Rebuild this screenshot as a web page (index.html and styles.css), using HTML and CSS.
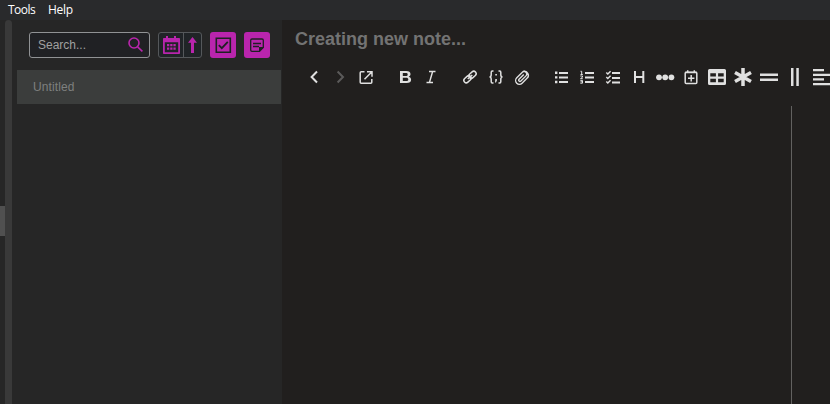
FILE: index.html
```html
<!DOCTYPE html>
<html lang="en">
<head>
<meta charset="utf-8">
<title>Notes</title>
<link rel="stylesheet" href="styles.css">
</head>
<body>
<nav class="menu"><span class="tools">Tools</span><span class="help">Help</span></nav>
<main class="app">
  <div class="gutter"><div class="handle"></div></div>
  <div class="track"></div>
  <aside class="sidebar">
    <div class="filters">
      <div class="search"><span>Search...</span>
        <svg width="16" height="16" viewBox="0 0 16 16" fill="none" stroke="#b925ad" stroke-width="1.6"><circle cx="6" cy="6" r="5"/><path d="M9.600 9.800l4.800 4.600"/></svg>
      </div>
      <div class="sort">
        <svg width="24" height="24" viewBox="0 0 24 24"><path fill="#b925ad" fill-rule="evenodd" d="M4.800 5H7V3h2v2h6V3h2v2h3.200q.8 0 .8.8v14.400q0 .8-.8.800H4.800q-.8 0-.8-.8V5.800q0-.8.8-.8zM5.800 9.300v9.900h13.400V9.300z"/><path fill="#b925ad" d="M8 11h2.300v2.300H8zm3.200 0h2.300v2.300h-2.300zm3.200 0h2.300v2.300h-2.300zM8 14.400h2.300v2.300H8zm3.200 0h2.300v2.300h-2.300zm3.200 0h2.300v2.300h-2.300z"/></svg>
        <i class="split"></i>
        <svg width="17" height="24" viewBox="0 0 17 24" fill="#b925ad"><path d="M8.500 4l4.500 5.700h-3V20H7V9.700H4z"/></svg>
      </div>
      <div class="action"><svg width="26" height="26" viewBox="0 0 26 26" fill="none" stroke="#1f2023"><path stroke-width="1.600" d="M6.300 6.300h14v14h-14z"/><path stroke-width="1.800" d="M8.800 13.200l3 3 6-6.300"/></svg></div>
      <div class="action"><svg width="26" height="26" viewBox="0 0 26 26" fill="none" stroke="#1f2023" stroke-width="1.300"><path d="M15.500 19.300H8q-1.300 0-1.300-1.300V8.300Q6.700 7 8 7h10q1.300 0 1.300 1.300v7.200z"/><path d="M9 11.500h8M9 14.500h6"/><path fill="#1f2023" stroke="none" d="M15 20v-5h5z"/></svg></div>
    </div>
    <div class="note">Untitled</div>
  </aside>
  <section class="editor">
    <h1>Creating new note...</h1>
    <div class="toolbar">
      <svg viewBox="0 0 26 26"><path class="s2" d="M16 7.500L10.600 13l5.400 5.500"/></svg>
      <svg class="dim" viewBox="0 0 26 26"><path class="s2" d="M10.600 7.500L16 13l-5.400 5.500"/></svg>
      <svg viewBox="0 0 26 26"><path class="s" d="M11.500 7.700H8.200q-1 0-1 1v9.600q0 1 1 1h9.600q1 0 1-1V15M14 7.700h5v5M19 7.700l-7.500 7.500"/></svg>
      <i class="gap"></i>
      <svg viewBox="0 0 26 26"><path fill-rule="evenodd" class="f" d="M8 7h6.200c2.800 0 4.300 1.100 4.300 3.100 0 1.300-.7 2.200-1.800 2.600 1.500.4 2.400 1.400 2.400 3 0 2.200-1.700 3.300-4.500 3.300H8zM10.800 9v2.900h2.900c1.300 0 2-.5 2-1.500 0-1-.7-1.400-2-1.400zm0 4.800V17h3.300c1.400 0 2.200-.5 2.200-1.600s-.8-1.600-2.200-1.600z"/></svg>
      <svg viewBox="0 0 26 26"><path class="s" d="M11 7.600h6.500M8.500 18.600H15M14.600 7.600l-3.200 11"/></svg>
      <i class="gap"></i>
      <svg viewBox="0 0 26 26"><g class="s" transform="rotate(-42 13 13)"><rect x="5.600" y="10.600" width="8" height="4.800" rx="2.400"/><rect x="12.400" y="10.600" width="8" height="4.800" rx="2.400"/><path d="M10 13h6"/></g></svg>
      <svg viewBox="0 0 26 26"><path class="s" d="M10.500 7H9.300Q8.200 7 8.200 8.200v2.600Q8.200 13 6.500 13q1.700 0 1.700 2.200v2.600q0 1.200 1.100 1.200h1.200M15.500 7h1.200q1.100 0 1.100 1.200v2.600q0 2.200 1.700 2.200-1.700 0-1.700 2.200v2.600q0 1.200-1.100 1.200h-1.200"/><path class="f" d="M12.300 10h1.600v1.600h-1.600zm0 5h1.600v1.600L13 18.500h-1z"/></svg>
      <svg viewBox="0 0 26 26"><path class="s" transform="translate(.2 .9) rotate(-45 13 13) scale(.92)" d="M19 9.900H10a3.300 3.300 0 0 0 0 8.200h7.500a4.300 4.300 0 0 0 2.500-8M19 9.900c3 0 3 5.600 0 5.600h-8.300c-1.800 0-1.800-2.800 0-2.800H18"/></svg>
      <i class="gap"></i>
      <svg viewBox="0 0 26 26"><path class="s2" d="M11 9h9M11 13.500h9M11 18h9"/><path class="f" d="M7 7.600h2.400v2.400H7zm0 4.600h2.400v2.400H7zm0 4.600h2.400v2.400H7z"/></svg>
      <svg viewBox="0 0 26 26"><path class="s2" d="M11 9h9M11 13.500h9M11 18h9"/><path class="s thin" d="M6.500 7.300h1.200v3M6.500 10.500h2.300M6.300 12h2.200v1.200L6.500 14.700h2.300M6.300 16.400h2.200v2.800H6.300M6.500 17.800h2"/></svg>
      <svg viewBox="0 0 26 26"><path class="s2" d="M12 9h8M12 14h8M12 18.500h8"/><path class="s" d="M6.300 8.500l1.500 1.500 2.800-2.700M6.300 13l1.500 1.500 2.800-2.700M6.300 17.500L7.800 19l2.800-2.700"/></svg>
      <svg viewBox="0 0 26 26"><path class="s2" d="M9 7v12M17.300 7v12M9 13h8.300"/></svg>
      <svg viewBox="0 0 26 26"><g class="f"><circle cx="7" cy="13.300" r="2.900"/><circle cx="13.200" cy="13.300" r="2.900"/><circle cx="19.400" cy="13.300" r="2.900"/></g></svg>
      <svg viewBox="0 0 26 26"><rect class="s" x="7.200" y="8.200" width="11.600" height="11.400" rx="1"/><path class="s" d="M7 8.400h12M9.700 6.300v2M16.300 6.300v2M13.200 11v6.400M10 14.200h6.400"/></svg>
      <svg viewBox="0 0 26 26"><path fill-rule="evenodd" class="f" d="M5.500 5h15q1.500 0 1.500 1.500v13q0 1.500-1.500 1.500h-15Q4 21 4 19.500v-13Q4 5 5.500 5zM6.300 9.200v3.300h5.600V9.200zm7.800 0v3.300h5.600V9.200zm-7.800 5.500v3.600h5.600v-3.600zm7.800 0v3.600h5.600v-3.600z"/></svg>
      <svg viewBox="0 0 26 26"><path class="s3" d="M13 4v18M5 8.500l16 9M5 17.500l16-9"/></svg>
      <svg viewBox="0 0 26 26"><path class="f" d="M4 9.500h18v2.500H4zm0 5h18V17H4z"/></svg>
      <svg viewBox="0 0 26 26"><path class="f" d="M9 4h2.500v18H9zm5.300 0h2.500v18h-2.500z"/></svg>
      <svg viewBox="0 0 26 26"><path class="f" d="M5 5h11v2.300H5zm0 4.700h17V12H5zm0 4.500h11v2.300H5zm0 4.700h17v2.300H5z"/></svg>
    </div>
    <div class="panes"><div class="source"></div><div class="preview"></div></div>
  </section>
</main>
</body>
</html>
```
FILE: styles.css
```css
* { box-sizing: border-box; }
body { margin: 0; height: 404px; overflow: hidden; display: flex; flex-direction: column; background: #262626; font-family: "Liberation Sans", Arial, sans-serif; }
.menu { height: 20px; display: flex; gap: 13px; padding-left: 8px; background: #292a2c; color: #fff; font: 12px/20px "Open Sans", sans-serif; }
.tools { width: 27px; letter-spacing: -0.5px; }
.help { letter-spacing: -0.3px; }
.app { flex: 1; display: flex; min-height: 0; }
.gutter { width: 5px; padding-top: 186px; }
.handle { height: 30px; background: #505050; }
.track { width: 7px; background: #393939; border-radius: 4px 4px 0 0; }
.sidebar { width: 270px; padding: 12px 1px 0 5px; }
.filters { display: flex; gap: 8px; padding-left: 12px; height: 38px; align-items: flex-start; }
.search { width: 121px; height: 26px; display: flex; align-items: center; justify-content: space-between; padding: 0 5px 0 8px; border: 1px solid #909294; border-radius: 3px; background: #202124; color: #a0a0a0; font-size: 12px; }
.search span { letter-spacing: 0; }
.sort { width: 44px; height: 26px; display: flex; border: 1px solid #55585b; border-radius: 3px; background: #202427; }
.sort svg { flex: none; }
.split { width: 1px; background: #55585b; }
.action { width: 26px; height: 26px; border-radius: 3px; background: #b925ad; }
.action svg { display: block; }
.note { height: 34px; padding-left: 16px; background: #3b3d3c; color: #7e807f; font-size: 12px; line-height: 34px; letter-spacing: 0.1px; }
.editor { flex: 1; min-width: 0; overflow: hidden; display: flex; flex-direction: column; background: #211f1e; }
h1 { margin: 0; height: 44px; padding-left: 13px; color: #737373; font-size: 18px; line-height: 38px; }
.toolbar { display: flex; height: 42px; padding-left: 19px; color: #e0e0e0; }
.toolbar svg { flex: none; width: 26px; height: 26px; }
.toolbar .dim { color: #5b5a5a; }
.gap { flex: none; width: 13px; }
.f { fill: currentColor; }
.s, .s2, .s3 { fill: none; stroke: currentColor; stroke-width: 1.5; }
.s2 { stroke-width: 2; }
.s3 { stroke-width: 3.5; }
.thin { stroke-width: 1; }
.panes { flex: 1; display: flex; }
.source { width: 510px; border-right: 1px solid #626160; }
.preview { flex: 1; }
```
